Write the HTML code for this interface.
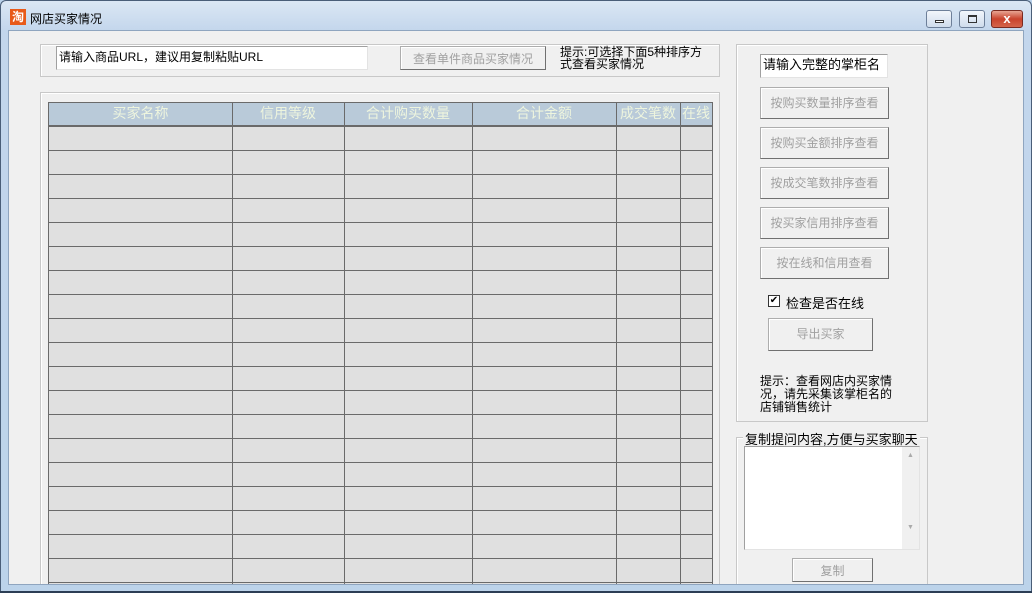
<!DOCTYPE html><html><head><meta charset="utf-8"><style>
*{margin:0;padding:0;box-sizing:border-box}
body{width:1032px;height:593px;overflow:hidden;background:#b9d1ea;font-family:"Liberation Sans","Noto Sans CJK SC","WenQuanYi Zen Hei",sans-serif;font-size:12px;position:relative}
.a{position:absolute}
.frame{left:0;top:0;width:1032px;height:593px;background:linear-gradient(#dbe7f4,#c3d6ec 30px,#bcd3ea);border:1px solid #4a5e78;border-radius:6px 6px 0 0}
.client{left:8px;top:30px;width:1016px;height:555px;background:#f0f0f0;border:1px solid #8fa5bf;overflow:hidden}
.grp{border:1px solid #c8c8c8;box-shadow:inset 1px 1px 0 #fff}
.btn{background:#f0f0f0;border:1px solid #adadad;border-right-color:#707070;border-bottom-color:#707070;box-shadow:inset 1px 1px 0 #fff;color:#a0a0a0;text-align:center;font-size:12px;line-height:24px}
.inp{background:#fff;border:1px solid #a0a0a0;border-right-color:#e3e3e3;border-bottom-color:#e3e3e3;padding-left:2px;font-size:12px;line-height:20px}
.tb{width:26px;height:18px;border:1px solid #6d7f99;border-radius:3px;background:linear-gradient(#f2f6fb,#cfdcec)}
.h{color:#eef5de;font-size:14px;line-height:20px;text-align:center;top:72px;white-space:nowrap;overflow:hidden}
.v{top:72px;width:1px;height:483px;background:#6a6a6a}
</style></head><body>
<div class="a frame"></div>
<div class="a" style="left:10px;top:9px;width:16px;height:16px;background:#e85a1a;color:#fff;font-size:12px;line-height:16px;text-align:center;font-weight:bold">淘</div>
<div class="a" style="left:30px;top:10px;font-size:12px;color:#000">网店买家情况</div>
<div class="a tb" style="left:926px;top:10px"><div class="a" style="left:8px;top:9px;width:9px;height:3px;border:1px solid #333;background:#fff"></div></div>
<div class="a tb" style="left:959px;top:10px"><div class="a" style="left:8px;top:4px;width:9px;height:8px;border:1px solid #333;border-top-width:2px"></div></div>
<div class="a" style="left:991px;top:10px;width:32px;height:18px;border:1px solid #7a2a20;border-radius:3px;background:linear-gradient(#e8a493,#c9432d 50%,#d4644b);color:#fff;font-weight:bold;text-align:center;line-height:16px;font-size:13px">x</div>
<div class="a client">
<div class="a grp" style="left:31px;top:13px;width:680px;height:33px"></div>
<div class="a inp" style="left:47px;top:15px;width:312px;height:24px">请输入商品URL，建议用复制粘贴URL</div>
<div class="a btn" style="left:391px;top:15px;width:146px;height:24px">查看单件商品买家情况</div>
<div class="a" style="left:551px;top:15px;font-size:12px;line-height:12px;width:150px">提示:可选择下面5种排序方式查看买家情况</div>
<div class="a grp" style="left:31px;top:61px;width:680px;height:520px"></div>
<div class="a" style="left:39px;top:71px;width:665px;height:490px;background-color:#e0e0e0;background-image:repeating-linear-gradient(#e0e0e0 0 23px,#6a6a6a 23px 24px);border:1px solid #6a6a6a;border-bottom:none"></div>
<div class="a" style="left:39px;top:71px;width:665px;height:24px;background:#b9cad9;border:1px solid #6a6a6a"></div>
<div class="a h" style="left:40px;width:183px">买家名称</div>
<div class="a h" style="left:223px;width:112px">信用等级</div>
<div class="a h" style="left:335px;width:128px">合计购买数量</div>
<div class="a h" style="left:463px;width:144px">合计金额</div>
<div class="a h" style="left:607px;width:64px">成交笔数</div>
<div class="a h" style="left:671px;width:32px">在线</div>
<div class="a v" style="left:223px"></div>
<div class="a v" style="left:335px"></div>
<div class="a v" style="left:463px"></div>
<div class="a v" style="left:607px"></div>
<div class="a v" style="left:671px"></div>
<div class="a grp" style="left:727px;top:13px;width:192px;height:378px"></div>
<div class="a inp" style="left:751px;top:23px;width:128px;height:24px;font-size:13px">请输入完整的掌柜名</div>
<div class="a btn" style="left:751px;top:56px;width:129px;height:32px;line-height:30px">按购买数量排序查看</div>
<div class="a btn" style="left:751px;top:96px;width:129px;height:32px;line-height:30px">按购买金额排序查看</div>
<div class="a btn" style="left:751px;top:136px;width:129px;height:32px;line-height:30px">按成交笔数排序查看</div>
<div class="a btn" style="left:751px;top:176px;width:129px;height:32px;line-height:30px">按买家信用排序查看</div>
<div class="a btn" style="left:751px;top:216px;width:129px;height:32px;line-height:30px">按在线和信用查看</div>
<div class="a" style="left:759px;top:264px;width:12px;height:12px;border:1px solid #333;background:#fff;font-size:10px;line-height:10px;text-align:center">✔</div>
<div class="a" style="left:777px;top:262px;font-size:13px">检查是否在线</div>
<div class="a btn" style="left:759px;top:287px;width:105px;height:33px;line-height:31px">导出买家</div>
<div class="a" style="left:751px;top:344px;width:140px;font-size:12px;line-height:13px">提示：查看网店内买家情况，请先采集该掌柜名的店铺销售统计</div>
<div class="a grp" style="left:727px;top:406px;width:192px;height:180px"></div>
<div class="a" style="left:734px;top:398px;background:#f0f0f0;padding:0 2px;font-size:13px">复制提问内容,方便与买家聊天</div>
<div class="a" style="left:735px;top:415px;width:176px;height:104px;background:#fff;border:1px solid #a0a0a0;border-right-color:#e3e3e3;border-bottom-color:#e3e3e3"></div>
<div class="a" style="left:893px;top:416px;width:17px;height:102px;background:#f0f0f0;color:#aaa;font-size:7px;text-align:center;line-height:18px">▲<br><br><br><br>▼</div>
<div class="a btn" style="left:783px;top:527px;width:81px;height:24px">复制</div>
</div>
<div class="a" style="left:0;top:591px;width:1032px;height:2px;background:#2c3e55"></div>
</body></html>
